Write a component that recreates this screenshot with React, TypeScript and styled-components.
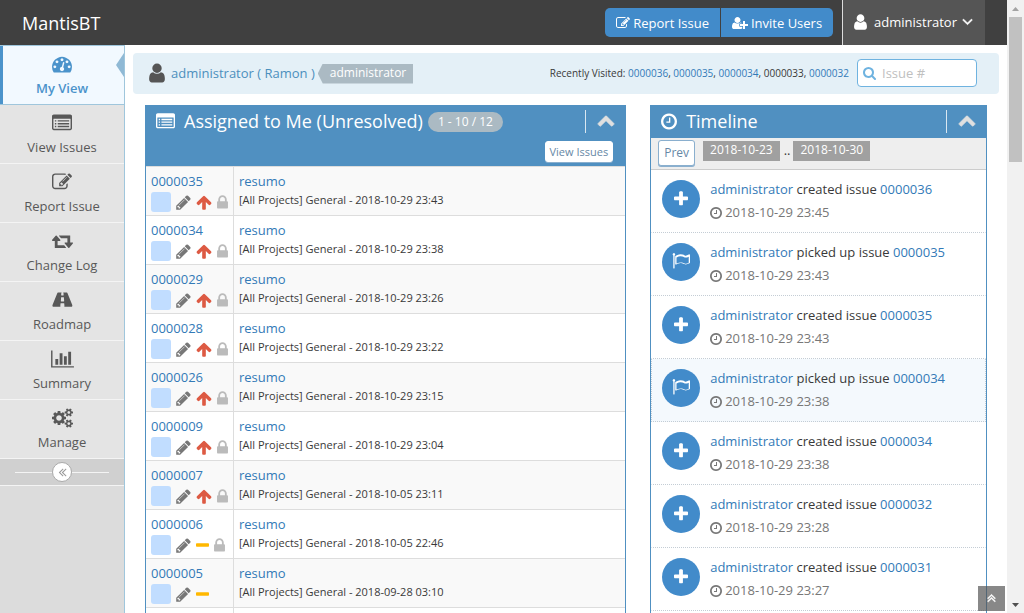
import React from 'react';
import styled, { createGlobalStyle, css } from 'styled-components';

const GlobalStyle = createGlobalStyle`
  *, *::before, *::after { box-sizing: border-box; }
  body {
    margin: 0;
    background: #fff;
    color: #393939;
    font: 13px/20px 'Open Sans', 'Noto Sans', sans-serif;
    overflow: hidden;
  }
  button, input { font: inherit; }
  a { color: #337ab7; text-decoration: none; }
  ul { list-style: none; margin: 0; padding: 0; }
  h1, h2 { margin: 0; font-weight: 400; }
`;

/* ---------- icons: [advance width, path] on a 1792 unit em ---------- */

const dot = (y: number) =>
  `M256 ${y}h128v128h-128zM512 ${y}h1024v128h-1024z`;

const glyphs = {
  tachometer: [1792, 'M384 1152q0-53-37.5-90.5t-90.5-37.5-90.5 37.5-37.5 90.5 37.5 90.5 90.5 37.5 90.5-37.5 37.5-90.5zm192-448q0-53-37.5-90.5t-90.5-37.5-90.5 37.5-37.5 90.5 37.5 90.5 90.5 37.5 90.5-37.5 37.5-90.5zm428 481l101-382q6-26-7.5-48.5t-38.5-29.5-48 6.5-30 39.5l-101 382q-60 5-107 43.5t-63 98.5q-20 77 20 146t117 89 146-20 89-117q16-60-6-117t-72-91zm660-33q0-53-37.5-90.5t-90.5-37.5-90.5 37.5-37.5 90.5 37.5 90.5 90.5 37.5 90.5-37.5 37.5-90.5zm-640-640q0-53-37.5-90.5t-90.5-37.5-90.5 37.5-37.5 90.5 37.5 90.5 90.5 37.5 90.5-37.5 37.5-90.5zm448 192q0-53-37.5-90.5t-90.5-37.5-90.5 37.5-37.5 90.5 37.5 90.5 90.5 37.5 90.5-37.5 37.5-90.5zm320 448q0 261-141 483-19 29-54 29h-1402q-35 0-54-29-141-221-141-483 0-182 71-348t191-286 286-191 348-71 348 71 286 191 191 286 71 348z'],
  listAlt: [1792, `M1792 288v1088q0 66-47 113t-113 47h-1472q-66 0-113-47t-47-113v-1088q0-66 47-113t113-47h1472q66 0 113 47t47 113zM1664 1376v-832q0-32-32-32h-1472q-32 0-32 32v832q0 32 32 32h1472q32 0 32-32z${dot(640)}${dot(896)}${dot(1152)}`],
  edit: [1792, 'M888 1184l116-116-152-152-116 116v56h96v96h56zm440-720q-16-16-33 1l-350 350q-17 17-1 33t33-1l350-350q17-17 1-33zm80 594v190q0 119-84.5 203.5t-203.5 84.5h-832q-119 0-203.5-84.5t-84.5-203.5v-832q0-119 84.5-203.5t203.5-84.5h832q63 0 117 25 15 7 18 23 3 17-9 29l-49 49q-14 14-32 8-23-6-45-6h-832q-66 0-113 47t-47 113v832q0 66 47 113t113 47h832q66 0 113-47t47-113v-126q0-13 9-22l64-64q15-15 35-7t20 29zm-96-738l288 288-672 672h-288v-288zm444 132l-92 92-288-288 92-92q28-28 68-28t68 28l152 152q28 28 28 68t-28 68z'],
  retweet: [1920, 'M1280 1504q0 13-9.5 22.5t-22.5 9.5h-960q-8 0-13.5-2t-9-7-5.5-8-3-11.5-1-11.5v-600h-192q-26 0-45-19t-19-45q0-24 15-41l320-384q19-22 49-22t49 22l320 384q15 17 15 41 0 26-19 45t-45 19h-192v384h576q16 0 25 11l160 192q7 10 7 21zm640-416q0 24-15 41l-320 384q-20 23-49 23t-49-23l-320-384q-15-17-15-41 0-26 19-45t45-19h192v-384h-576q-16 0-25-12l-160-192q-7-9-7-20 0-13 9.5-22.5t22.5-9.5h960q8 0 13.5 2t9 7 5.5 8 3 11.5 1 11.5v600h192q26 0 45 19t19 45z'],
  road: [1920, 'M1111 1000v-4l-24-320q-1-13-11-22.5t-23-9.5h-186q-13 0-23 9.5t-11 22.5l-24 320v4q-1 12 8 20t21 8h244q12 0 21-8t8-20zm749 429q0 75-47 75h-704q13 0 22-9.5t8-22.5l-20-256q-1-13-11-22.5t-23-9.5h-272q-13 0-23 9.5t-11 22.5l-20 256q-1 13 8 22.5t22 9.5h-704q-47 0-47-75 0-56 27-117l417-1044q8-20 26-34t39-14h339q-13 0-23 9.5t-11 22.5l-15 192q-1 14 8 23t22 9h166q13 0 22-9t8-23l-15-192q-1-13-11-22.5t-23-9.5h339q21 0 39 14t26 34l417 1044q27 61 27 117z'],
  chart: [2048, 'M640 896v512h-256v-512h256zm384-512v1024h-256v-1024h256zm1024 1152v128h-2048v-1536h128v1408h1920zm-640-896v768h-256v-768h256zm384-384v1152h-256v-1152h256z'],
  cogs: [1920, 'M896 896q0-106-75-181t-181-75-181 75-75 181 75 181 181 75 181-75 75-181zm768 512q0-52-38-90t-90-38-90 38-38 90q0 53 37.5 90.5t90.5 37.5 90.5-37.5 37.5-90.5zm0-1024q0-52-38-90t-90-38-90 38-38 90q0 53 37.5 90.5t90.5 37.5 90.5-37.5 37.5-90.5zm-384 421v185q0 10-7 19.5t-16 10.5l-155 24q-11 35-32 76 34 48 90 115 7 11 7 20 0 12-7 19-23 30-82.5 89.5t-78.5 59.5q-11 0-21-7l-115-90q-37 19-77 31-11 108-23 155-7 24-30 24h-186q-11 0-20-7.5t-10-17.5l-23-153q-34-10-75-31l-118 89q-7 7-20 7-11 0-21-8-144-133-144-160 0-9 7-19 10-14 41-53t47-61q-23-44-35-82l-152-24q-10-1-17-9.5t-7-19.5v-185q0-10 7-19.5t16-10.5l155-24q11-35 32-76-34-48-90-115-7-11-7-20 0-12 7-20 22-30 82-89t79-59q11 0 21 7l115 90q34-18 77-32 11-108 23-154 7-24 30-24h186q11 0 20 7.5t10 17.5l23 153q34 10 75 31l118-89q8-7 20-7 11 0 21 8 144 133 144 160 0 8-7 19-12 16-42 54t-45 60q23 48 34 82l152 23q10 2 17 10.5t7 19.5zm640 533v140q0 16-149 31-12 27-30 52 51 113 51 138 0 4-4 7-122 71-124 71-8 0-46-47t-52-68q-20 2-30 2t-30-2q-14 21-52 68t-46 47q-2 0-124-71-4-3-4-7 0-25 51-138-18-25-30-52-149-15-149-31v-140q0-16 149-31 13-29 30-52-51-113-51-138 0-4 4-7 4-2 35-20t59-34 30-16q8 0 46 46.5t52 67.5q20-2 30-2t30 2q51-71 92-112l6-2q4 0 124 70 4 3 4 7 0 25-51 138 17 23 30 52 149 15 149 31zm0-1024v140q0 16-149 31-12 27-30 52 51 113 51 138 0 4-4 7-122 71-124 71-8 0-46-47t-52-68q-20 2-30 2t-30-2q-14 21-52 68t-46 47q-2 0-124-71-4-3-4-7 0-25 51-138-18-25-30-52-149-15-149-31v-140q0-16 149-31 13-29 30-52-51-113-51-138 0-4 4-7 4-2 35-20t59-34 30-16q8 0 46 46.5t52 67.5q20-2 30-2t30 2q51-71 92-112l6-2q4 0 124 70 4 3 4 7 0 25-51 138 17 23 30 52 149 15 149 31z'],
  user: [1280, 'M1536 1399q0 109-62.5 187t-150.5 78h-854q-88 0-150.5-78t-62.5-187q0-85 8.5-160.5t31.5-152 58.5-131 94-89 134.5-34.5q131 128 313 128t313-128q76 0 134.5 34.5t94 89 58.5 131 31.5 152 8.5 160.5zm-256-887q0 159-112.5 271.5t-271.5 112.5-271.5-112.5-112.5-271.5 112.5-271.5 271.5-112.5 271.5 112.5 112.5 271.5z'],
  userPlus: [2048, 'M704 896q-159 0-271.5-112.5t-112.5-271.5 112.5-271.5 271.5-112.5 271.5 112.5 112.5 271.5-112.5 271.5-271.5 112.5zm960 128h352q13 0 22.5 9.5t9.5 22.5v192q0 13-9.5 22.5t-22.5 9.5h-352v352q0 13-9.5 22.5t-22.5 9.5h-192q-13 0-22.5-9.5t-9.5-22.5v-352h-352q-13 0-22.5-9.5t-9.5-22.5v-192q0-13 9.5-22.5t22.5-9.5h352v-352q0-13 9.5-22.5t22.5-9.5h192q13 0 22.5 9.5t9.5 22.5v352zm-736 224q0 52 38 90t90 38h256v238q-68 50-171 50h-874q-121 0-194-69t-73-190q0-53 3.5-103.5t14-109 26.5-108.5 43-97.5 62-81 85.5-53.5 111.5-20q19 0 39 17 79 61 154.5 91.5t164.5 30.5 164.5-30.5 154.5-91.5q20-17 39-17 132 0 217 96h-223q-52 0-90 38t-38 90v192z'],
  clock: [1536, 'M1024 544v448q0 14-9 23t-23 9h-320q-14 0-23-9t-9-23v-64q0-14 9-23t23-9h224v-352q0-14 9-23t23-9h64q14 0 23 9t9 23zm416 352q0-148-73-273t-198-198-273-73-273 73-198 198-73 273 73 273 198 198 273 73 273-73 198-198 73-273zm224 0q0 209-103 385.5t-279.5 279.5-385.5 103-385.5-103-279.5-279.5-103-385.5 103-385.5 279.5-279.5 385.5-103 385.5 103 279.5 279.5 103 385.5z'],
  plus: [1408, 'M1600 736v192q0 40-28 68t-68 28h-416v416q0 40-28 68t-68 28h-192q-40 0-68-28t-28-68v-416h-416q-40 0-68-28t-28-68v-192q0-40 28-68t68-28h416v-416q0-40 28-68t68-28h192q40 0 68 28t28 68v416h416q40 0 68 28t28 68z'],
  flag: [1792, 'M1664 983v-616q-169 91-306 91-82 0-145-32-100-49-184-76.5t-178-27.5q-173 0-403 127v599q245-113 433-113 55 0 103.5 7.5t98 26 77 31 82.5 39.5l28 14q44 22 101 22 120 0 293-92zm-1344-855q0 35-17.5 64t-46.5 46v1266q0 14-9 23t-23 9h-64q-14 0-23-9t-9-23v-1266q-29-17-46.5-46t-17.5-64q0-53 37.5-90.5t90.5-37.5 90.5 37.5 37.5 90.5zm1472 64v763q0 39-35 57-10 5-17 9-218 116-369 116-88 0-158-35l-28-14q-64-33-99-48t-91-29-114-14q-102 0-235.5 44t-228.5 102q-15 9-33 9-16 0-32-8-32-19-32-56v-742q0-35 31-55 35-21 78.5-42.5t114-52 152.5-49.5 155-19q112 0 209 31t209 86q38 19 89 19 122 0 310-112 22-12 31-17 31-16 62 2 31 20 31 54z'],
  pencil: [1536, 'M491 1536l91-91-235-235-91 91v107h128v128h107zm523-928q0-22-22-22-10 0-17 7l-542 542q-7 7-7 17 0 22 22 22 10 0 17-7l542-542q7-7 7-17zm-54-192l416 416-832 832h-416v-416zm683 96q0 53-37 90l-166 166-416-416 166-165q36-38 90-38 53 0 91 38l235 234q37 39 37 91z'],
  arrowUp: [1664, 'M1675 971q0 51-37 90l-75 75q-38 38-91 38-54 0-90-38l-294-293v704q0 52-37.5 84.5t-90.5 32.5h-128q-53 0-90.5-32.5t-37.5-84.5v-704l-294 293q-36 38-90 38t-90-38l-75-75q-38-38-38-90 0-53 38-91l651-651q35-37 90-37 54 0 91 37l651 651q37 39 37 91z'],
  minus: [1408, 'M1600 736v192q0 40-28 68t-68 28h-1216q-40 0-68-28t-28-68v-192q0-40 28-68t68-28h1216q40 0 68 28t28 68z'],
  lock: [1152, 'M640 768h512v-192q0-106-75-181t-181-75-181 75-75 181v192zm832 96v576q0 40-28 68t-68 28h-960q-40 0-68-28t-28-68v-576q0-40 28-68t68-28h32v-192q0-184 132-316t316-132 316 132 132 316v192h32q40 0 68 28t28 68z'],
  search: [1664, 'M1216 832q0-185-131.5-316.5t-316.5-131.5-316.5 131.5-131.5 316.5 131.5 316.5 316.5 131.5 316.5-131.5 131.5-316.5zm512 832q0 52-38 90t-90 38q-54 0-90-38l-343-342q-179 124-399 124-143 0-273.5-55.5t-225-150-150-225-55.5-273.5 55.5-273.5 150-225 225-150 273.5-55.5 273.5 55.5 225 150 150 225 55.5 273.5q0 220-124 399l343 343q37 37 37 90z'],
  chevronUp: [1792, 'M1683 1331l-166 165q-19 19-45 19t-45-19l-531-531-531 531q-19 19-45 19t-45-19l-166-165q-19-19-19-45.5t19-45.5l742-741q19-19 45-19t45 19l742 741q19 19 19 45.5t-19 45.5z'],
  angleDown: [1152, 'M1395 736q0 13-10 23l-466 466q-10 10-23 10t-23-10l-466-466q-10-10-10-23t10-23l50-50q10-10 23-10t23 10l393 393 393-393q10-10 23-10t23 10l50 50q10 10 10 23z'],
  doubleUp: [1152, 'M1395 1184q0 13-10 23l-50 50q-10 10-23 10t-23-10l-393-393-393 393q-10 10-23 10t-23-10l-50-50q-10-10-10-23t10-23l466-466q10-10 23-10t23 10l466 466q10 10 10 23zm0-384q0 13-10 23l-50 50q-10 10-23 10t-23-10l-393-393-393 393q-10 10-23 10t-23-10l-50-50q-10-10-10-23t10-23l466-466q10-10 23-10t23 10l466 466q10 10 10 23z'],
  doubleLeft: [1152, 'M1011 1376q0 13-10 23l-50 50q-10 10-23 10t-23-10l-466-466q-10-10-10-23t10-23l466-466q10-10 23-10t23 10l50 50q10 10 10 23t-10 23l-393 393 393 393q10 10 10 23zm384 0q0 13-10 23l-50 50q-10 10-23 10t-23-10l-466-466q-10-10-10-23t10-23l466-466q10-10 23-10t23 10l50 50q10 10 10 23t-10 23l-393 393 393 393q10 10 10 23z'],
} satisfies Record<string, [number, string]>;

type GlyphName = keyof typeof glyphs;

const Svg = styled.svg`
  display: block;
  flex: none;
  fill: currentColor;
`;

function Icon({ name, size = 14, bold }: { name: GlyphName; size?: number; bold?: boolean }) {
  const [w, d] = glyphs[name] as [number, string];
  const x = w < 1792 ? (1792 - w) / 2 : 0;
  return (
    <Svg
      aria-hidden="true"
      width={Math.round((w * size) / 1792)}
      height={size}
      viewBox={`${x} 0 ${w} 1792`}
    >
      <path
        fillRule={name === 'listAlt' ? 'evenodd' : 'nonzero'}
        stroke="currentColor"
        strokeWidth={bold ? 70 : 0}
        d={d}
      />
    </Svg>
  );
}

/* ---------- frame ---------- */

const Frame = styled.div`
  display: grid;
  grid-template-columns: minmax(0, 1fr) 17px;
  height: 100vh;
`;

const Page = styled.div`
  display: flex;
  flex-direction: column;
  min-height: 0;
  overflow: hidden;
`;

const ScrollTrack = styled.div`
  display: flex;
  flex-direction: column;
  background: #f1f1f1;
`;

const ScrollThumbArea = styled.div`
  flex: 1;
  padding: 0 2px;
`;

const ScrollThumb = styled.div`
  height: 25%;
  background: #c1c1c1;
`;

const ScrollArrow = styled.div<{ $down?: boolean }>`
  display: flex;
  align-items: center;
  justify-content: center;
  height: 17px;
  color: ${(p) => (p.$down ? '#505050' : '#a3a3a3')};
`;

/* ---------- navbar ---------- */

const Navbar = styled.header`
  display: flex;
  align-items: center;
  flex: none;
  height: 45px;
  padding: 0 22px;
  background: #404040;
  color: #fff;
`;

const Brand = styled.h1`
  flex: 1;
  font-size: 18px;
  line-height: 24px;
  a { color: #fff; }
`;

const NavButtons = styled.div`
  display: flex;
  gap: 1px;
  margin-right: 9px;
`;

const NavButton = styled.button`
  display: flex;
  align-items: center;
  gap: 3px;
  height: 29px;
  padding: 0 11px;
  border: 0;
  background: #428bca;
  color: #fff;
  &:first-child { border-radius: 5px 0 0 5px; }
  &:last-child { border-radius: 0 5px 5px 0; }
`;

const UserMenu = styled.button`
  display: flex;
  align-items: center;
  height: 45px;
  padding: 0 12px 2px 11px;
  border: 0;
  border-left: 1px solid #ddd;
  background: #555;
  color: #fff;
  span { margin: 0 5px 0 7px; }
`;

/* ---------- sidebar ---------- */

const Body = styled.div`
  display: flex;
  flex: 1;
  min-height: 0;
`;

const Sidebar = styled.nav`
  flex: none;
  width: 125px;
  background: #dcdcdc;
  border-right: 1px solid #9fc6dc;
`;

const MenuLink = styled.a<{ $active?: boolean }>`
  position: relative;
  display: flex;
  flex-direction: column;
  align-items: center;
  gap: 2px;
  height: 59px;
  padding-top: 8px;
  border-bottom: 1px solid #f4f4f4;
  background: #e4e4e4;
  color: #585858;
  line-height: 24px;
  ${(p) => p.$active && css`
    height: 60px;
    border-top: 1px solid #9fc6dc;
    border-bottom-color: #9fc6dc;
    background: #f2f9ff;
    color: #4b93cb;
    font-weight: 600;
    &::before {
      content: '';
      position: absolute;
      inset: 0 auto 0 0;
      width: 3px;
      background: #4b93cb;
    }
    &::after {
      content: '';
      position: absolute;
      right: 0;
      top: 7px;
      border: solid transparent;
      border-width: 12px 8px 12px 0;
      border-right-color: #90b9d5;
    }
  `}
`;

const CollapseBar = styled.div`
  display: flex;
  align-items: center;
  height: 27px;
  padding: 0 15px;
  border-bottom: 1px solid #f4f4f4;
  background: #d0d0d0;
  &::before, &::after {
    content: '';
    flex: 1;
    height: 1px;
    background: #f4f4f4;
  }
`;

const CollapseButton = styled.button`
  display: flex;
  align-items: center;
  justify-content: center;
  width: 20px;
  height: 20px;
  padding: 0;
  border: 1px solid #aaa;
  border-radius: 50%;
  background: #fff;
  color: #999;
`;

/* ---------- content ---------- */

const Main = styled.main`
  display: flex;
  flex-direction: column;
  flex: 1;
  min-width: 0;
  min-height: 0;
  padding: 8px 8px 0;
`;

const UserBar = styled.div`
  display: flex;
  align-items: center;
  flex: none;
  height: 41px;
  padding: 0 22px 2px 16px;
  border-radius: 4px;
  background: #e4f0f7;
`;

const UserIcon = styled.span`
  margin-right: 6px;
  color: #555;
`;

const UserLink = styled.a`
  color: #4c8fbd;
`;

const RoleTag = styled.span`
  margin: 2px 0 0 3px;
  height: 20px;
  padding: 0 7px 0 12px;
  background: #abbac3;
  color: #fff;
  font-size: 12px;
  line-height: 18px;
  clip-path: polygon(5px 0, 100% 0, 100% 100%, 5px 100%, 0 50%);
`;

const Recent = styled.div`
  margin-left: auto;
  font-size: 10px;
`;

const SearchBox = styled.label`
  display: flex;
  align-items: center;
  gap: 6px;
  width: 120px;
  height: 28px;
  margin-left: 8px;
  padding: 0 5px;
  border: 1px solid #6fb3e0;
  border-radius: 4px;
  background: #fff;
  color: #6fb3e0;
`;

const SearchInput = styled.input`
  flex: 1;
  min-width: 0;
  padding: 0;
  border: 0;
  outline: 0;
  background: none;
  color: #858585;
  &::placeholder { color: #c0c0c0; opacity: 1; }
`;

const Columns = styled.div`
  display: grid;
  grid-template-columns: minmax(0, 7fr) minmax(0, 5fr);
  flex: 1;
  min-height: 0;
  padding-top: 11px;
`;

const Column = styled.div`
  display: flex;
  min-height: 0;
  padding: 0 12px;
`;

const Widget = styled.section`
  flex: 1;
  min-width: 0;
  border: 1px solid #5090c1;
  border-width: 0 1px;
`;

const WidgetHead = styled.header`
  display: flex;
  align-items: center;
  height: 33px;
  padding: 0 10px 1px;
  background: #5090c1;
  color: #fff;
`;

const WidgetTitle = styled.h2`
  display: flex;
  align-items: center;
  flex: 1;
  gap: 9px;
  font-size: 18px;
  line-height: 24px;
  white-space: nowrap;
`;

const Badge = styled.span`
  margin: 2px 0 0 -4px;
  height: 20px;
  padding: 0 10px;
  border-radius: 10px;
  background: #abbac3;
  font-size: 12px;
  line-height: 20px;
`;

const Collapse = styled.button`
  display: flex;
  padding: 1px 0 4px 11px;
  border: 0;
  border-left: 1px solid #d9e7f1;
  background: none;
  color: #e0e0e0;
`;

const HeadTools = styled.div`
  display: flex;
  justify-content: flex-end;
  height: 28px;
  padding: 3px 12px 0;
  background: #5090c1;
`;

const SmallButton = styled.button<{ $outlined?: boolean }>`
  padding: 0 ${(p) => (p.$outlined ? 5 : 4)}px;
  border: 1px solid ${(p) => (p.$outlined ? '#8aafce' : '#fff')};
  border-radius: 3px;
  background: #fff;
  color: #6688a6;
  font-size: ${(p) => (p.$outlined ? 12 : 11)}px;
  height: ${(p) => (p.$outlined ? 26 : 21)}px;
  line-height: 18px;
  box-shadow: 0 1px 0 #8aafce;
`;

const IssueTable = styled.table`
  width: 100%;
  border-collapse: collapse;
`;

const IssueRow = styled.tr`
  height: 49px;
  &:nth-child(odd) { background: #f9f9f9; }
`;

const Cell = styled.td<{ $narrow?: boolean }>`
  padding: 4px 5px 3px;
  border-top: 1px solid #ddd;
  vertical-align: top;
  ${(p) => p.$narrow && css`
    width: 86px;
    border-right: 1px solid #ddd;
  `}
`;

const IssueMeta = styled.div`
  font-size: 11px;
  line-height: 17px;
`;

const Status = styled.div`
  display: flex;
  align-items: center;
  gap: 5px;
  margin-top: 1px;
`;

const StatusSwatch = styled.span`
  width: 20px;
  height: 20px;
  border-radius: 3px;
  background: #c1ddff;
`;

const Tint = styled.span<{ $color: string }>`
  color: ${(p) => p.$color};
`;

const DateBar = styled.div`
  display: flex;
  align-items: flex-start;
  height: 32px;
  padding: 2px 7px 0;
  border-bottom: 1px solid #ccc;
  background: #eee;
`;

const DateTag = styled.span`
  margin: 1px 4px 0 0;
  height: 20px;
  padding: 0 7px;
  background: #a0a0a0;
  color: #fff;
  font-size: 12px;
  line-height: 18px;
`;

const DateGap = styled.span`
  margin-right: 3px;
`;

const PrevButton = styled(SmallButton)`
  margin-right: 8px;
`;

const Entry = styled.li<{ $marked?: boolean }>`
  display: flex;
  gap: 10px;
  height: 63px;
  padding: 10px;
  border: 1px dotted transparent;
  border-top: 0;
  border-bottom-color: #c4cdd5;
  ${(p) => p.$marked && css`
    border-color: #c4cdd5;
    background: #f4f9fd;
  `}
`;

const EntryIcon = styled.span`
  display: flex;
  align-items: center;
  justify-content: center;
  width: 38px;
  height: 38px;
  border-radius: 50%;
  background: #428bca;
  color: #fff;
`;

const EntryText = styled.div`
  line-height: 19px;
`;

const EntryTime = styled.div`
  display: flex;
  align-items: center;
  gap: 3px;
  margin-top: 4px;
  color: #777;
`;

const BackToTop = styled.button`
  position: fixed;
  right: 19px;
  bottom: 2px;
  display: flex;
  align-items: center;
  justify-content: center;
  width: 27px;
  height: 25px;
  padding: 0;
  border: 0;
  background: rgba(85, 85, 85, 0.7);
  color: #fff;
`;

/* ---------- data ---------- */

const menu: { label: string; icon: GlyphName; active?: boolean }[] = [
  { label: 'My View', icon: 'tachometer', active: true },
  { label: 'View Issues', icon: 'listAlt' },
  { label: 'Report Issue', icon: 'edit' },
  { label: 'Change Log', icon: 'retweet' },
  { label: 'Roadmap', icon: 'road' },
  { label: 'Summary', icon: 'chart' },
  { label: 'Manage', icon: 'cogs' },
];

const recent = ['0000036', '0000035', '0000034', '0000033', '0000032'];

const issues = [
  { id: '0000035', date: '2018-10-29 23:43', high: true, locked: true },
  { id: '0000034', date: '2018-10-29 23:38', high: true, locked: true },
  { id: '0000029', date: '2018-10-29 23:26', high: true, locked: true },
  { id: '0000028', date: '2018-10-29 23:22', high: true, locked: true },
  { id: '0000026', date: '2018-10-29 23:15', high: true, locked: true },
  { id: '0000009', date: '2018-10-29 23:04', high: true, locked: true },
  { id: '0000007', date: '2018-10-05 23:11', high: true, locked: true },
  { id: '0000006', date: '2018-10-05 22:46', high: false, locked: true },
  { id: '0000005', date: '2018-09-28 03:10', high: false, locked: false },
];

const timeline = [
  { action: 'created', id: '0000036', time: '23:45' },
  { action: 'picked up', id: '0000035', time: '23:43' },
  { action: 'created', id: '0000035', time: '23:43' },
  { action: 'picked up', id: '0000034', time: '23:38', marked: true },
  { action: 'created', id: '0000034', time: '23:38' },
  { action: 'created', id: '0000032', time: '23:28' },
  { action: 'created', id: '0000031', time: '23:27' },
];

export default function App() {
  return (
    <Frame>
      <GlobalStyle />
      <Page>
        <Navbar>
          <Brand><a href="#">MantisBT</a></Brand>
          <NavButtons>
            <NavButton><Icon name="edit" size={14} />Report Issue</NavButton>
            <NavButton><Icon name="userPlus" size={14} />Invite Users</NavButton>
          </NavButtons>
          <UserMenu>
            <Icon name="user" size={18} />
            <span>administrator</span>
            <Icon name="angleDown" size={17} bold />
          </UserMenu>
        </Navbar>
        <Body>
          <Sidebar>
            {menu.map((m) => (
              <MenuLink key={m.label} href="#" $active={m.active}>
                <Icon name={m.icon} size={20} />
                {m.label}
              </MenuLink>
            ))}
            <CollapseBar>
              <CollapseButton aria-label="Collapse sidebar">
                <Icon name="doubleLeft" size={14} />
              </CollapseButton>
            </CollapseBar>
          </Sidebar>
          <Main>
            <UserBar>
              <UserIcon><Icon name="user" size={22} /></UserIcon>
              <UserLink href="#">administrator ( Ramon )</UserLink>
              <RoleTag>administrator</RoleTag>
              <Recent>
                Recently Visited:{' '}
                {recent.map((id, i) => (
                  <React.Fragment key={id}>
                    {i > 0 && ', '}
                    {id === '0000033' ? id : <a href="#">{id}</a>}
                  </React.Fragment>
                ))}
              </Recent>
              <SearchBox>
                <Icon name="search" size={14} />
                <SearchInput type="text" placeholder="Issue #" aria-label="Issue number" />
              </SearchBox>
            </UserBar>
            <Columns>
              <Column>
                <Widget>
                  <WidgetHead>
                    <WidgetTitle>
                      <Icon name="listAlt" size={19} />
                      Assigned to Me (Unresolved)
                      <Badge>1 - 10 / 12</Badge>
                    </WidgetTitle>
                    <Collapse aria-label="Collapse"><Icon name="chevronUp" size={18} bold /></Collapse>
                  </WidgetHead>
                  <HeadTools><SmallButton>View Issues</SmallButton></HeadTools>
                  <IssueTable>
                    <tbody>
                      {issues.map((it) => (
                        <IssueRow key={it.id}>
                          <Cell $narrow>
                            <a href="#">{it.id}</a>
                            <Status>
                              <StatusSwatch />
                              <Tint $color="#777"><Icon name="pencil" size={17} /></Tint>
                              {it.high
                                ? <Tint $color="#dd5a43"><Icon name="arrowUp" size={17} /></Tint>
                                : <Tint $color="#ffb800"><Icon name="minus" size={17} /></Tint>}
                              {it.locked && <Tint $color="#bbb"><Icon name="lock" size={17} /></Tint>}
                            </Status>
                          </Cell>
                          <Cell>
                            <a href="#">resumo</a>
                            <IssueMeta>[All Projects] General - {it.date}</IssueMeta>
                          </Cell>
                        </IssueRow>
                      ))}
                      <IssueRow><Cell $narrow /><Cell /></IssueRow>
                    </tbody>
                  </IssueTable>
                </Widget>
              </Column>
              <Column>
                <Widget>
                  <WidgetHead>
                    <WidgetTitle><Icon name="clock" size={19} />Timeline</WidgetTitle>
                    <Collapse aria-label="Collapse"><Icon name="chevronUp" size={18} bold /></Collapse>
                  </WidgetHead>
                  <DateBar>
                    <PrevButton $outlined>Prev</PrevButton>
                    <DateTag>2018-10-23</DateTag>
                    <DateGap>..</DateGap>
                    <DateTag>2018-10-30</DateTag>
                  </DateBar>
                  <ul>
                    {timeline.map((t, i) => (
                      <Entry key={i} $marked={t.marked}>
                        <EntryIcon><Icon name={t.action === 'created' ? 'plus' : 'flag'} size={18} /></EntryIcon>
                        <EntryText>
                          <a href="#">administrator</a> {t.action} issue <a href="#">{t.id}</a>
                          <EntryTime><Icon name="clock" size={14} />2018-10-29 {t.time}</EntryTime>
                        </EntryText>
                      </Entry>
                    ))}
                  </ul>
                </Widget>
              </Column>
            </Columns>
          </Main>
        </Body>
      </Page>
      <ScrollTrack aria-hidden="true">
        <ScrollArrow><Svg width="7" height="4" viewBox="0 0 14 8"><path d="M0 8L7 0L14 8z" /></Svg></ScrollArrow>
        <ScrollThumbArea><ScrollThumb /></ScrollThumbArea>
        <ScrollArrow $down><Svg width="7" height="4" viewBox="0 0 14 8"><path d="M0 0L7 8L14 0z" /></Svg></ScrollArrow>
      </ScrollTrack>
      <BackToTop aria-label="Back to top"><Icon name="doubleUp" size={14} bold /></BackToTop>
    </Frame>
  );
}
